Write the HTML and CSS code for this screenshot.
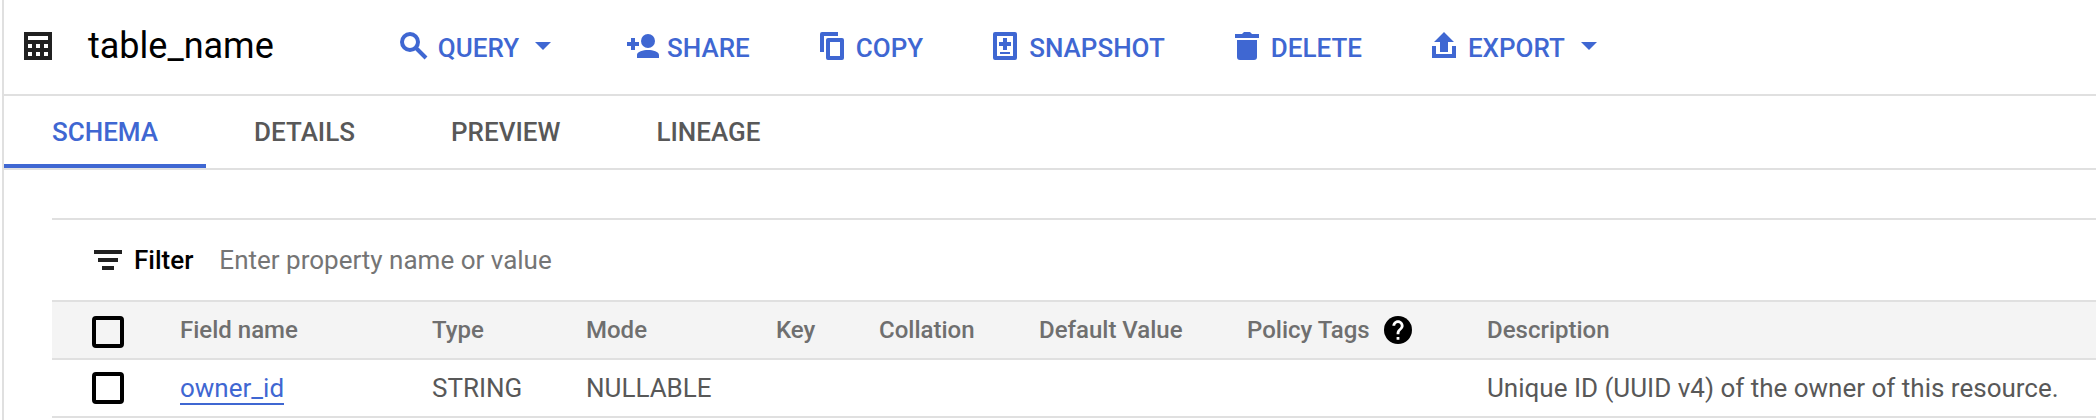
FILE: index.html
```html
<!DOCTYPE html>
<html lang="en">
<head>
<meta charset="utf-8">
<title>table_name</title>
<link rel="stylesheet" href="styles.css">
</head>
<body>
<main class="panel">
  <header class="header">
    <svg class="icon icon-dark" viewBox="0 0 36 36" aria-hidden="true"><path fill-rule="evenodd" d="M4 4h28v28H4zM8 8v4h20V8zM8 16v4h4v-4zM16 16v4h4v-4zM24 16v4h4v-4zM8 24v4h4v-4zM16 24v4h4v-4zM24 24v4h4v-4z"/></svg>
    <h1 class="title">table_name</h1>
    <div class="toolbar">
      <button class="action" type="button">
        <svg class="icon" viewBox="0 0 36 36" aria-hidden="true"><g fill="none" stroke="currentColor" stroke-width="4"><circle cx="14" cy="14" r="8"/><path d="M19 19L30 30"/></g></svg>
        <span>QUERY</span>
        <svg class="icon" viewBox="0 0 36 36" aria-hidden="true"><path d="M10 14h16l-8 8z"/></svg>
      </button>
      <button class="action" type="button">
        <svg class="icon" viewBox="0 0 36 36" aria-hidden="true"><circle cx="23" cy="13" r="7"/><path d="M12 30v-3c0-3.500 6-5 11-5s11 1.500 11 5v3zM6 10h4v4h4v4h-4v4H6v-4H2v-4h4z"/></svg>
        <span>SHARE</span>
      </button>
      <button class="action" type="button">
        <svg class="icon" viewBox="0 0 36 36" aria-hidden="true"><path fill-rule="evenodd" d="M8 4h16v4H10v16H6V6a2 2 0 0 1 2-2zM14 10h14a2 2 0 0 1 2 2v18a2 2 0 0 1-2 2H14a2 2 0 0 1-2-2V12a2 2 0 0 1 2-2zM16 14v14h10V14z"/></svg>
        <span>COPY</span>
      </button>
      <button class="action" type="button">
        <svg class="icon" viewBox="0 0 36 36" aria-hidden="true"><path fill-rule="evenodd" d="M8 4h20a2 2 0 0 1 2 2v24a2 2 0 0 1-2 2H8a2 2 0 0 1-2-2V6a2 2 0 0 1 2-2zM10 8v20h16V8z"/><path d="M16 10h4v4h4v4h-4v4h-4v-4h-4v-4h4zM13 24h10v2H13z"/></svg>
        <span>SNAPSHOT</span>
      </button>
      <button class="action" type="button">
        <svg class="icon" viewBox="0 0 36 36" aria-hidden="true"><path d="M13 6l2-2h6l2 2h7v4H6V6zM8 12h20v17a3 3 0 0 1-3 3H11a3 3 0 0 1-3-3z"/></svg>
        <span>DELETE</span>
      </button>
      <button class="action" type="button">
        <svg class="icon" viewBox="0 0 36 36" aria-hidden="true"><path d="M18 4l10 10h-6v10h-8V14H8zM6 18h4v8h16v-8h4v12H6z"/></svg>
        <span>EXPORT</span>
        <svg class="icon" viewBox="0 0 36 36" aria-hidden="true"><path d="M10 14h16l-8 8z"/></svg>
      </button>
    </div>
  </header>

  <nav class="tabs">
    <a class="tab tab-active" href="#schema" aria-current="page">SCHEMA</a>
    <a class="tab" href="#details">DETAILS</a>
    <a class="tab" href="#preview">PREVIEW</a>
    <a class="tab" href="#lineage">LINEAGE</a>
  </nav>

  <section class="schema" id="schema">
    <div class="filter">
      <svg class="icon icon-dark" viewBox="0 0 36 36" aria-hidden="true"><path d="M4 8h28v4H4zM8 16h20v4H8zM12 24h12v4H12z"/></svg>
      <label class="filter-label" for="filter">Filter</label>
      <input class="filter-input" id="filter" type="text" placeholder="Enter property name or value">
    </div>
    <table class="fields">
      <colgroup>
        <col class="col-check"><col class="col-name"><col class="col-type"><col class="col-mode"><col class="col-key"><col class="col-collation"><col class="col-default"><col class="col-tags"><col>
      </colgroup>
      <thead>
        <tr>
          <th class="check-cell"><input class="check" type="checkbox" aria-label="Select all fields"></th>
          <th>Field name</th>
          <th>Type</th>
          <th>Mode</th>
          <th>Key</th>
          <th>Collation</th>
          <th>Default Value</th>
          <th><span class="with-help">Policy Tags
            <svg class="help" viewBox="2 2 20 20" role="img" aria-label="Help"><circle class="help-disc" cx="12" cy="12" r="10"/><path class="help-mark" d="M13 19h-2v-2h2zM15.070 11.250l-.9.920C13.450 12.900 13 13.500 13 15h-2v-.5c0-1.100.45-2.100 1.170-2.830l1.240-1.260c.37-.36.59-.86.59-1.410 0-1.100-.9-2-2-2s-2 .9-2 2H8c0-2.210 1.790-4 4-4s4 1.790 4 4c0 .88-.36 1.680-.93 2.250z"/></svg>
          </span></th>
          <th>Description</th>
        </tr>
      </thead>
      <tbody>
        <tr>
          <td class="check-cell"><input class="check" type="checkbox" aria-label="Select owner_id"></td>
          <td><a class="field-link" href="#owner_id">owner_id</a></td>
          <td>STRING</td>
          <td>NULLABLE</td>
          <td></td>
          <td></td>
          <td></td>
          <td></td>
          <td>Unique ID (UUID v4) of the owner of this resource.</td>
        </tr>
      </tbody>
    </table>
  </section>
</main>
</body>
</html>
```
FILE: styles.css
```css
* {
  box-sizing: border-box;
}

:root {
  --blue: #3f67d2;
  --line: #e0e0e0;
}

body {
  margin: 0;
  background: #fff;
  color: #000;
  font-family: Roboto, "Liberation Sans", sans-serif;
  font-size: 26px;
}

.panel {
  min-height: 100vh;
  margin-left: 2px;
  border-left: 2px solid var(--line);
}

.icon {
  flex: none;
  width: 36px;
  height: 36px;
  fill: currentColor;
}

.icon-dark {
  color: #212121;
}

.header {
  display: flex;
  align-items: flex-start;
  padding: 28px 16px 26px;
  border-bottom: 2px solid var(--line);
}

.title {
  margin: 0 122px 0 32px;
  font-size: 36px;
  font-weight: 400;
  line-height: 36px;
}

.toolbar {
  display: flex;
  gap: 64px;
}

.action {
  display: flex;
  align-items: flex-start;
  gap: 6px;
  padding: 0;
  border: 0;
  background: none;
  color: var(--blue);
  font: inherit;
  font-weight: 500;
  line-height: 40px;
  white-space: nowrap;
  cursor: pointer;
}

.tabs {
  display: flex;
  border-bottom: 2px solid var(--line);
}

.tab {
  padding: 4px 48px 0;
  border-bottom: 4px solid transparent;
  color: #585858;
  font-weight: 500;
  line-height: 64px;
  text-decoration: none;
}

.tab-active {
  border-color: var(--blue);
  color: var(--blue);
}

.schema {
  margin: 48px 0 0 48px;
  border-top: 2px solid var(--line);
}

.filter {
  display: flex;
  align-items: center;
  padding: 20px 38px;
}

.filter-label {
  margin: 0 26px 0 8px;
  font-weight: 500;
}

.filter-input {
  flex: 1;
  height: 40px;
  padding: 0;
  border: 0;
  outline: 0;
  background: none;
  color: #000;
  font: inherit;
}

.filter-input::placeholder {
  color: #757575;
  opacity: 1;
}

.fields {
  width: 100%;
  border-collapse: separate;
  border-spacing: 0;
  table-layout: fixed;
}

.fields th,
.fields td {
  height: 58px;
  padding: 0 24px;
  border-bottom: 2px solid var(--line);
  line-height: 32px;
  text-align: left;
  vertical-align: middle;
  white-space: nowrap;
}

.fields th {
  height: 60px;
  border-top: 2px solid var(--line);
  background: #f4f4f4;
  color: #6f6f6f;
  font-size: 24px;
  font-weight: 500;
}

.fields td {
  color: #585858;
}

.fields .check-cell {
  padding: 0 0 0 40px;
}

.fields th.check-cell {
  padding-top: 4px;
}

.col-check { width: 104px; }
.col-name { width: 252px; }
.col-type { width: 154px; }
.col-mode { width: 190px; }
.col-key { width: 103px; }
.col-collation { width: 160px; }
.col-default { width: 208px; }
.col-tags { width: 240px; }

.check {
  display: block;
  appearance: none;
  width: 32px;
  height: 32px;
  margin: 0;
  border: 4px solid #000;
  border-radius: 4px;
}

.check:checked {
  background: #000;
}

.with-help {
  display: flex;
  align-items: center;
  gap: 14px;
}

.help {
  width: 28px;
  height: 28px;
}

.help-disc {
  fill: #000;
}

.help-mark {
  fill: #fff;
}

.field-link {
  border-bottom: 2px solid var(--blue);
  color: var(--blue);
  text-decoration: none;
}
```
